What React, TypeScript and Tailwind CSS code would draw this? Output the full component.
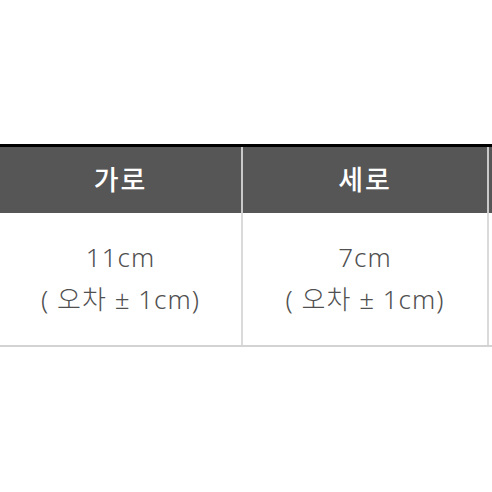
export default function App() {
  const cols = [
    { title: "가로", size: "11cm" },
    { title: "세로", size: "7cm" },
    { title: "", size: "" },
  ];

  return (
    <div
      className="w-[492px] h-[492px] overflow-hidden bg-white pt-[144px]"
      style={{ fontFamily: '"Noto Sans", "Noto Sans CJK KR", sans-serif' }}
    >
      <div className="w-[740px] border-t-[3px] border-black">
        <div className="grid grid-cols-[243px_246px_251px] bg-[#565656]">
          {cols.map((c, i) => (
            <div
              key={i}
              className="h-[66px] flex items-center justify-center border-r-2 border-[#c9c9c9] text-white text-[27px] font-medium tracking-[2px]"
            >
              {c.title}
            </div>
          ))}
        </div>
        <div className="grid grid-cols-[243px_246px_251px] border-b-2 border-[#d3d3d3]">
          {cols.map((c, i) => (
            <div
              key={i}
              className="h-[132px] flex flex-col items-center justify-center pb-[3px] border-r-2 border-[#dadada] text-[#505050] text-[26px] font-light leading-[42px] tracking-[1px]"
            >
              {c.size && (
                <>
                  <span>{c.size}</span>
                  <span>( 오차 ± 1cm)</span>
                </>
              )}
            </div>
          ))}
        </div>
      </div>
    </div>
  );
}
